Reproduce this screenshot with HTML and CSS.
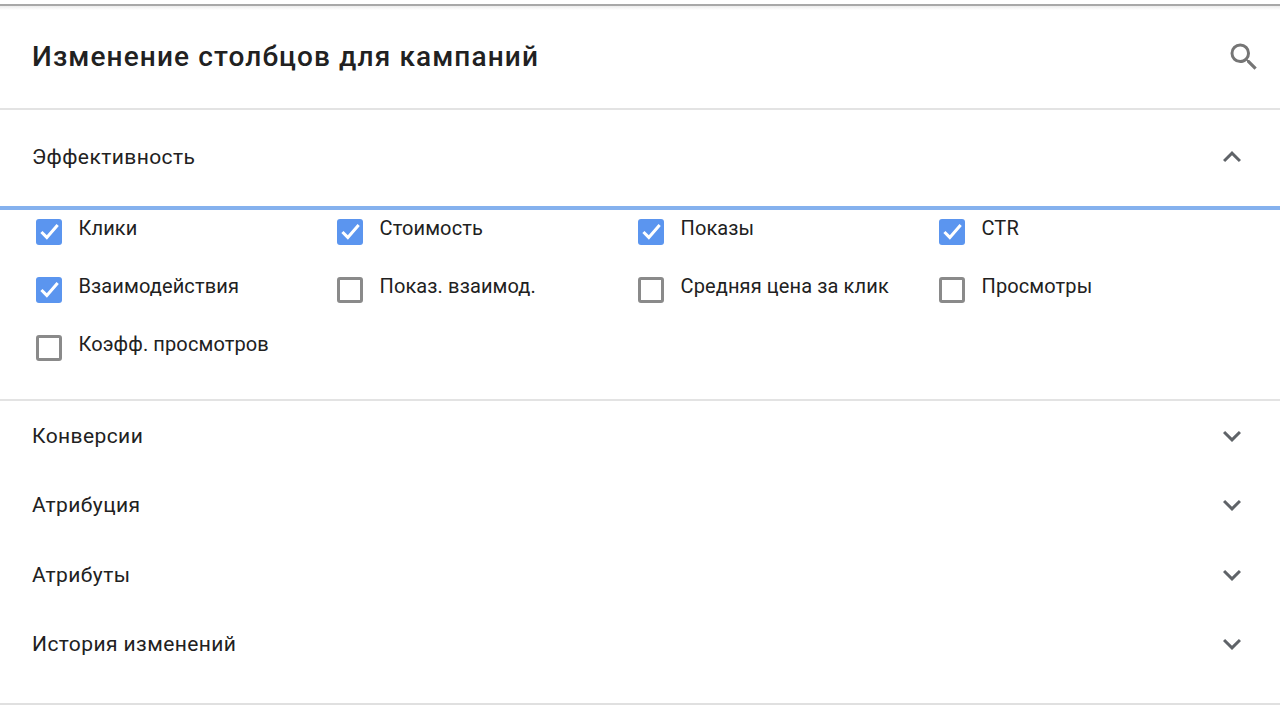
FILE: index.html
```html
<!DOCTYPE html>
<html lang="ru">
<head>
<meta charset="utf-8">
<title>Изменение столбцов для кампаний</title>
<link rel="stylesheet" href="styles.css">
</head>
<body>
<div class="panel">
  <header class="header">
    <h1 class="title">Изменение столбцов для кампаний</h1>
    <svg class="search" viewBox="0 0 24 24"><path d="M15.5 14h-.79l-.28-.27A6.47 6.47 0 0 0 16 9.5 6.5 6.5 0 1 0 9.5 16c1.61 0 3.09-.59 4.23-1.57l.27.28v.79l5 4.99L20.49 19l-4.99-5zm-6 0C7.01 14 5 11.99 5 9.5S7.01 5 9.5 5 14 7.01 14 9.5 11.99 14 9.5 14z"/></svg>
  </header>
  <div class="section-head open">
    <span>Эффективность</span>
    <svg class="chev" viewBox="0 0 24 24"><path d="M7.41 15.41 12 10.83l4.59 4.58L18 14l-6-6-6 6z"/></svg>
  </div>
  <div class="options">
    <label class="opt"><span class="box on"><svg viewBox="0 0 24 24"><path d="M5 12l5 5L20 5.5"/></svg></span>Клики</label>
    <label class="opt"><span class="box on"><svg viewBox="0 0 24 24"><path d="M5 12l5 5L20 5.5"/></svg></span>Стоимость</label>
    <label class="opt"><span class="box on"><svg viewBox="0 0 24 24"><path d="M5 12l5 5L20 5.5"/></svg></span>Показы</label>
    <label class="opt"><span class="box on"><svg viewBox="0 0 24 24"><path d="M5 12l5 5L20 5.5"/></svg></span>CTR</label>
    <label class="opt"><span class="box on"><svg viewBox="0 0 24 24"><path d="M5 12l5 5L20 5.5"/></svg></span>Взаимодействия</label>
    <label class="opt"><span class="box"></span>Показ. взаимод.</label>
    <label class="opt"><span class="box"></span>Средняя цена за клик</label>
    <label class="opt"><span class="box"></span>Просмотры</label>
    <label class="opt"><span class="box"></span>Коэфф. просмотров</label>
  </div>
  <div class="section-head"><span>Конверсии</span><svg class="chev" viewBox="0 0 24 24"><path d="M7.41 8.59 12 13.17l4.59-4.58L18 10l-6 6-6-6z"/></svg></div>
  <div class="section-head"><span>Атрибуция</span><svg class="chev" viewBox="0 0 24 24"><path d="M7.41 8.59 12 13.17l4.59-4.58L18 10l-6 6-6-6z"/></svg></div>
  <div class="section-head"><span>Атрибуты</span><svg class="chev" viewBox="0 0 24 24"><path d="M7.41 8.59 12 13.17l4.59-4.58L18 10l-6 6-6-6z"/></svg></div>
  <div class="section-head"><span>История изменений</span><svg class="chev" viewBox="0 0 24 24"><path d="M7.41 8.59 12 13.17l4.59-4.58L18 10l-6 6-6-6z"/></svg></div>
</div>
</body>
</html>
```
FILE: styles.css
```css
* { box-sizing: border-box; }
html, body { margin: 0; height: 717px; overflow: hidden; background: #fff; }
body { font-family: Roboto, "Noto Sans", sans-serif; color: #212121; }
.panel {
  height: 701px;
  margin-top: 4px;
  border-top: 2px solid #a8a8a8;
  border-bottom: 2px solid #e0e0e0;
  background: linear-gradient(#ececec, #fff 4px);
}
.header {
  height: 104px;
  display: flex;
  align-items: center;
  justify-content: space-between;
  padding: 0 18px 0 32px;
  border-bottom: 2px solid #e3e3e3;
}
.title { margin: 0; font-size: 28px; font-weight: 500; letter-spacing: 1.12px; line-height: 1; }
.search { width: 36px; height: 36px; fill: #757575; }
.section-head {
  height: 69.5px;
  display: flex;
  align-items: center;
  justify-content: space-between;
  padding: 0 30px 0 32px;
  font-size: 21px;
  letter-spacing: .41px;
}
.section-head.open { height: 100px; padding-bottom: 3px; border-bottom: 4px solid #85b1ee; }
.chev { width: 36px; height: 36px; fill: #5f6368; }
.options {
  height: 191px;
  display: grid;
  grid-template-columns: repeat(4, 301px);
  grid-auto-rows: 58px;
  padding: 0 0 0 36px;
  border-bottom: 2px solid #e3e3e3;
  font-size: 20px;
  letter-spacing: .12px;
}
.opt { display: flex; align-items: flex-start; gap: 16.5px; padding-top: 5px; line-height: 26px; }
.box {
  width: 26px; height: 26px; margin-top: 4px;
  border: 3px solid #8a8a8a;
  border-radius: 3px;
  flex: none;
}
.box.on { background: #5b95ef; border: 0; }
.box svg { display: block; width: 26px; height: 26px; fill: none; stroke: #fff; stroke-width: 2.8; }
```
